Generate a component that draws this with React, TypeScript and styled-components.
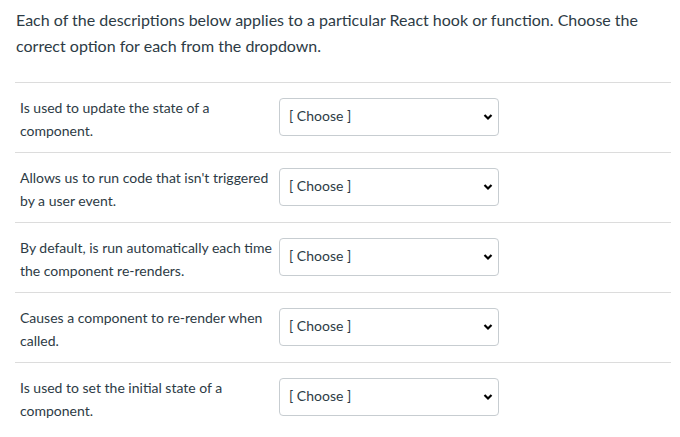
import React from "react";
import styled, { createGlobalStyle } from "styled-components";

const Global = createGlobalStyle`
  body {
    margin: 0;
    background: #fff;
    font-family: Lato, "Liberation Sans", sans-serif;
    color: #2d3b45;
  }
`;

const Page = styled.div`
  padding: 7px 9px 0 15px;
`;

const Intro = styled.p`
  margin: 0 0 23px 1px;
  font-size: 16px;
  line-height: 26px;
`;

const Row = styled.div`
  display: flex;
  align-items: flex-start;
  height: 70px;
  box-sizing: border-box;
  border-top: 1px solid #dcdcdc;
  padding: 13px 0 0 5px;
`;

const Label = styled.div`
  width: 259px;
  flex-shrink: 0;
  font-size: 14px;
  line-height: 23px;
`;

const SelectBox = styled.div`
  position: relative;
  flex-shrink: 0;
  margin-top: 2px;
  width: 220px;
  height: 38px;
`;

const Select = styled.select`
  appearance: none;
  width: 100%;
  height: 100%;
  box-sizing: border-box;
  border: 1px solid #c7cdd1;
  border-radius: 4px;
  background: #fff;
  padding: 0 30px 4px 9px;
  font-family: Lato, "Liberation Sans", sans-serif;
  font-size: 14px;
  color: #2d3b45;
`;

const Arrow = styled.svg`
  position: absolute;
  right: 6px;
  top: 15px;
  pointer-events: none;
`;

const items = [
  "Is used to update the state of a component.",
  "Allows us to run code that isn't triggered by a user event.",
  "By default, is run automatically each time the component re-renders.",
  "Causes a component to re-render when called.",
  "Is used to set the initial state of a component.",
];

const App = () => {
  return (
    <Page>
      <Global />
      <Intro>
        Each of the descriptions below applies to a particular React hook or
        function. Choose the correct option for each from the dropdown.
      </Intro>
      {items.map((text) => (
        <Row key={text}>
          <Label>{text}</Label>
          <SelectBox>
            <Select defaultValue="">
              <option value="">[ Choose ]</option>
              <option>useState</option>
              <option>useEffect</option>
            </Select>
            <Arrow width="10" height="8" viewBox="0 0 10 8">
              <path d="M1.5 2 L5 5.5 L8.5 2" fill="none" stroke="#000" strokeWidth="2.2" />
            </Arrow>
          </SelectBox>
        </Row>
      ))}
    </Page>
  );
};

export default App;
